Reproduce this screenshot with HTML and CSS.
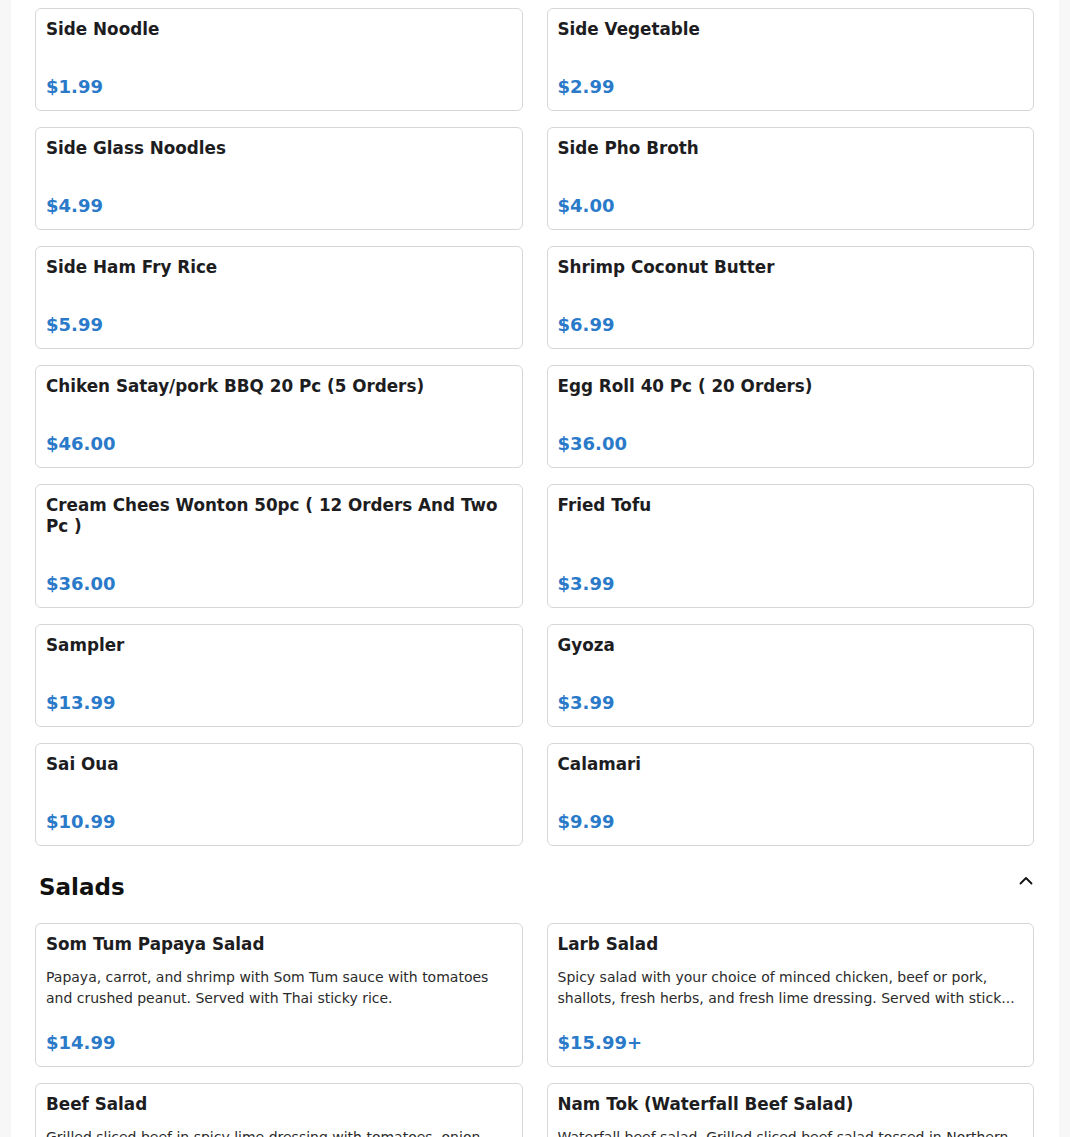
FILE: index.html
```html
<!DOCTYPE html>
<html lang="en">
<head>
<meta charset="utf-8">
<title>Menu</title>
<link rel="stylesheet" href="styles.css">
</head>
<body>
<main class="panel">
  <section class="grid">
    <article class="card"><h3 class="title">Side Noodle</h3><p class="desc"></p><div class="price">$1.99</div></article>
    <article class="card"><h3 class="title">Side Vegetable</h3><p class="desc"></p><div class="price">$2.99</div></article>
    <article class="card"><h3 class="title">Side Glass Noodles</h3><p class="desc"></p><div class="price">$4.99</div></article>
    <article class="card"><h3 class="title">Side Pho Broth</h3><p class="desc"></p><div class="price">$4.00</div></article>
    <article class="card"><h3 class="title">Side Ham Fry Rice</h3><p class="desc"></p><div class="price">$5.99</div></article>
    <article class="card"><h3 class="title">Shrimp Coconut Butter</h3><p class="desc"></p><div class="price">$6.99</div></article>
    <article class="card"><h3 class="title">Chiken Satay/pork BBQ 20 Pc (5 Orders)</h3><p class="desc"></p><div class="price">$46.00</div></article>
    <article class="card"><h3 class="title">Egg Roll 40 Pc ( 20 Orders)</h3><p class="desc"></p><div class="price">$36.00</div></article>
    <article class="card"><h3 class="title">Cream Chees Wonton 50pc ( 12 Orders And Two Pc )</h3><p class="desc"></p><div class="price">$36.00</div></article>
    <article class="card"><h3 class="title">Fried Tofu</h3><p class="desc"></p><div class="price">$3.99</div></article>
    <article class="card"><h3 class="title">Sampler</h3><p class="desc"></p><div class="price">$13.99</div></article>
    <article class="card"><h3 class="title">Gyoza</h3><p class="desc"></p><div class="price">$3.99</div></article>
    <article class="card"><h3 class="title">Sai Oua</h3><p class="desc"></p><div class="price">$10.99</div></article>
    <article class="card"><h3 class="title">Calamari</h3><p class="desc"></p><div class="price">$9.99</div></article>
  </section>

  <header class="section-head">
    <h2 class="section-title">Salads</h2>
    <svg class="chevron" width="14" height="9" viewBox="0 0 14 9" aria-hidden="true"><path d="M1.5 7.5 L7 2 L12.5 7.5" fill="none" stroke="#111" stroke-width="1.8" stroke-linecap="round" stroke-linejoin="round"/></svg>
  </header>

  <section class="grid">
    <article class="card"><h3 class="title">Som Tum Papaya Salad</h3><p class="desc">Papaya, carrot, and shrimp with Som Tum sauce with tomatoes and crushed peanut. Served with Thai sticky rice.</p><div class="price">$14.99</div></article>
    <article class="card"><h3 class="title">Larb Salad</h3><p class="desc">Spicy salad with your choice of minced chicken, beef or pork, shallots, fresh herbs, and fresh lime dressing. Served with stick...</p><div class="price">$15.99+</div></article>
    <article class="card"><h3 class="title">Beef Salad</h3><p class="desc">Grilled sliced beef in spicy lime dressing with tomatoes, onion, cucumber and fresh herbs.</p><div class="price">$15.99</div></article>
    <article class="card"><h3 class="title">Nam Tok (Waterfall Beef Salad)</h3><p class="desc">Waterfall beef salad. Grilled sliced beef salad tossed in Northern Thai style dressing with herbs.</p><div class="price">$16.99</div></article>
  </section>
</main>
</body>
</html>
```

FILE: styles.css
```css
* { box-sizing: border-box; }

html, body {
  margin: 0;
  padding: 0;
}

body {
  background: #f7f7f7;
  font-family: "DejaVu Sans", "Noto Sans", sans-serif;
  color: #1d1d1f;
}

.panel {
  width: 1048px;
  margin: 0 auto;
  background: #ffffff;
  padding: 8px 25px 40px 24px;
  min-height: 1137px;
}

.grid {
  display: grid;
  grid-template-columns: 1fr 1fr;
  column-gap: 24px;
  row-gap: 16px;
}

.card {
  border: 1px solid #d6d6d6;
  border-radius: 6px;
  padding: 10px 10px 10px 10px;
  display: flex;
  flex-direction: column;
  background: #fff;
}

.title {
  margin: 0;
  font-size: 16.8px;
  line-height: 21px;
  font-weight: bold;
  color: #1d1d1f;
}

.desc {
  margin: 12px 0 20px 0;
  min-height: 1px;
  font-size: 14px;
  line-height: 21px;
  color: #2b2b2b;
  display: -webkit-box;
  -webkit-line-clamp: 2;
  -webkit-box-orient: vertical;
  overflow: hidden;
}

.price {
  margin-top: auto;
  font-size: 18px;
  line-height: 27px;
  font-weight: bold;
  color: #2a7ac9;
}

.section-head {
  display: flex;
  align-items: flex-start;
  justify-content: space-between;
  padding: 27px 0 22px 4px;
}

.section-title {
  margin: 0;
  font-size: 23px;
  line-height: 28px;
  font-weight: bold;
  color: #111;
}

.chevron {
  margin-top: 3px;
  margin-right: 1px;
}
```
